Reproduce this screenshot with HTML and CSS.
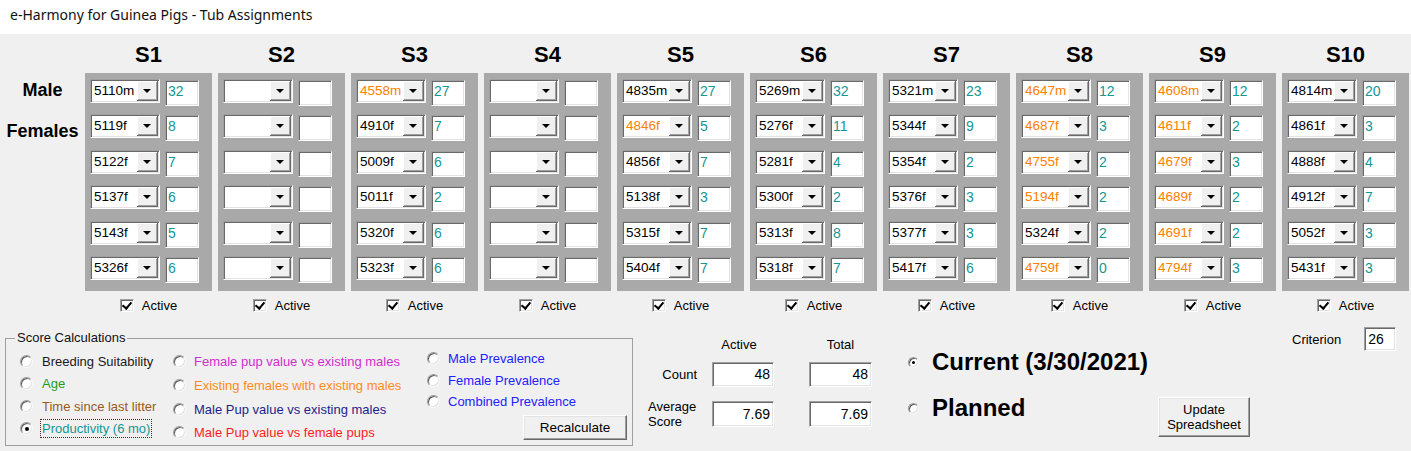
FILE: index.html
```html
<!DOCTYPE html>
<html>
<head>
<meta charset="utf-8">
<link rel="stylesheet" href="styles.css">
</head>
<body>
<div class="titlebar">e-Harmony for Guinea Pigs - Tub Assignments</div>
<div class="top">
  <div class="labels">
    <div class="lbl male">Male</div>
    <div class="lbl females">Females</div>
  </div>
  <div class="cols">
    <div class="col">
      <div class="head">S1</div>
      <div class="panel">
        <div class="row"><div class="combo"><span class="val">5110m</span><span class="btn"></span></div><div class="tb">32</div></div>
        <div class="row"><div class="combo"><span class="val">5119f</span><span class="btn"></span></div><div class="tb">8</div></div>
        <div class="row"><div class="combo"><span class="val">5122f</span><span class="btn"></span></div><div class="tb">7</div></div>
        <div class="row"><div class="combo"><span class="val">5137f</span><span class="btn"></span></div><div class="tb">6</div></div>
        <div class="row"><div class="combo"><span class="val">5143f</span><span class="btn"></span></div><div class="tb">5</div></div>
        <div class="row"><div class="combo"><span class="val">5326f</span><span class="btn"></span></div><div class="tb">6</div></div>
      </div>
      <div class="active"><span class="chk"></span>Active</div>
    </div>
    <div class="col">
      <div class="head">S2</div>
      <div class="panel">
        <div class="row"><div class="combo"><span class="val"></span><span class="btn"></span></div><div class="tb"></div></div>
        <div class="row"><div class="combo"><span class="val"></span><span class="btn"></span></div><div class="tb"></div></div>
        <div class="row"><div class="combo"><span class="val"></span><span class="btn"></span></div><div class="tb"></div></div>
        <div class="row"><div class="combo"><span class="val"></span><span class="btn"></span></div><div class="tb"></div></div>
        <div class="row"><div class="combo"><span class="val"></span><span class="btn"></span></div><div class="tb"></div></div>
        <div class="row"><div class="combo"><span class="val"></span><span class="btn"></span></div><div class="tb"></div></div>
      </div>
      <div class="active"><span class="chk"></span>Active</div>
    </div>
    <div class="col">
      <div class="head">S3</div>
      <div class="panel">
        <div class="row"><div class="combo"><span class="val o">4558m</span><span class="btn"></span></div><div class="tb">27</div></div>
        <div class="row"><div class="combo"><span class="val">4910f</span><span class="btn"></span></div><div class="tb">7</div></div>
        <div class="row"><div class="combo"><span class="val">5009f</span><span class="btn"></span></div><div class="tb">6</div></div>
        <div class="row"><div class="combo"><span class="val">5011f</span><span class="btn"></span></div><div class="tb">2</div></div>
        <div class="row"><div class="combo"><span class="val">5320f</span><span class="btn"></span></div><div class="tb">6</div></div>
        <div class="row"><div class="combo"><span class="val">5323f</span><span class="btn"></span></div><div class="tb">6</div></div>
      </div>
      <div class="active"><span class="chk"></span>Active</div>
    </div>
    <div class="col">
      <div class="head">S4</div>
      <div class="panel">
        <div class="row"><div class="combo"><span class="val"></span><span class="btn"></span></div><div class="tb"></div></div>
        <div class="row"><div class="combo"><span class="val"></span><span class="btn"></span></div><div class="tb"></div></div>
        <div class="row"><div class="combo"><span class="val"></span><span class="btn"></span></div><div class="tb"></div></div>
        <div class="row"><div class="combo"><span class="val"></span><span class="btn"></span></div><div class="tb"></div></div>
        <div class="row"><div class="combo"><span class="val"></span><span class="btn"></span></div><div class="tb"></div></div>
        <div class="row"><div class="combo"><span class="val"></span><span class="btn"></span></div><div class="tb"></div></div>
      </div>
      <div class="active"><span class="chk"></span>Active</div>
    </div>
    <div class="col">
      <div class="head">S5</div>
      <div class="panel">
        <div class="row"><div class="combo"><span class="val">4835m</span><span class="btn"></span></div><div class="tb">27</div></div>
        <div class="row"><div class="combo"><span class="val o">4846f</span><span class="btn"></span></div><div class="tb">5</div></div>
        <div class="row"><div class="combo"><span class="val">4856f</span><span class="btn"></span></div><div class="tb">7</div></div>
        <div class="row"><div class="combo"><span class="val">5138f</span><span class="btn"></span></div><div class="tb">3</div></div>
        <div class="row"><div class="combo"><span class="val">5315f</span><span class="btn"></span></div><div class="tb">7</div></div>
        <div class="row"><div class="combo"><span class="val">5404f</span><span class="btn"></span></div><div class="tb">7</div></div>
      </div>
      <div class="active"><span class="chk"></span>Active</div>
    </div>
    <div class="col">
      <div class="head">S6</div>
      <div class="panel">
        <div class="row"><div class="combo"><span class="val">5269m</span><span class="btn"></span></div><div class="tb">32</div></div>
        <div class="row"><div class="combo"><span class="val">5276f</span><span class="btn"></span></div><div class="tb">11</div></div>
        <div class="row"><div class="combo"><span class="val">5281f</span><span class="btn"></span></div><div class="tb">4</div></div>
        <div class="row"><div class="combo"><span class="val">5300f</span><span class="btn"></span></div><div class="tb">2</div></div>
        <div class="row"><div class="combo"><span class="val">5313f</span><span class="btn"></span></div><div class="tb">8</div></div>
        <div class="row"><div class="combo"><span class="val">5318f</span><span class="btn"></span></div><div class="tb">7</div></div>
      </div>
      <div class="active"><span class="chk"></span>Active</div>
    </div>
    <div class="col">
      <div class="head">S7</div>
      <div class="panel">
        <div class="row"><div class="combo"><span class="val">5321m</span><span class="btn"></span></div><div class="tb">23</div></div>
        <div class="row"><div class="combo"><span class="val">5344f</span><span class="btn"></span></div><div class="tb">9</div></div>
        <div class="row"><div class="combo"><span class="val">5354f</span><span class="btn"></span></div><div class="tb">2</div></div>
        <div class="row"><div class="combo"><span class="val">5376f</span><span class="btn"></span></div><div class="tb">3</div></div>
        <div class="row"><div class="combo"><span class="val">5377f</span><span class="btn"></span></div><div class="tb">3</div></div>
        <div class="row"><div class="combo"><span class="val">5417f</span><span class="btn"></span></div><div class="tb">6</div></div>
      </div>
      <div class="active"><span class="chk"></span>Active</div>
    </div>
    <div class="col">
      <div class="head">S8</div>
      <div class="panel">
        <div class="row"><div class="combo"><span class="val o">4647m</span><span class="btn"></span></div><div class="tb">12</div></div>
        <div class="row"><div class="combo"><span class="val o">4687f</span><span class="btn"></span></div><div class="tb">3</div></div>
        <div class="row"><div class="combo"><span class="val o">4755f</span><span class="btn"></span></div><div class="tb">2</div></div>
        <div class="row"><div class="combo"><span class="val o">5194f</span><span class="btn"></span></div><div class="tb">2</div></div>
        <div class="row"><div class="combo"><span class="val">5324f</span><span class="btn"></span></div><div class="tb">2</div></div>
        <div class="row"><div class="combo"><span class="val o">4759f</span><span class="btn"></span></div><div class="tb">0</div></div>
      </div>
      <div class="active"><span class="chk"></span>Active</div>
    </div>
    <div class="col">
      <div class="head">S9</div>
      <div class="panel">
        <div class="row"><div class="combo"><span class="val o">4608m</span><span class="btn"></span></div><div class="tb">12</div></div>
        <div class="row"><div class="combo"><span class="val o">4611f</span><span class="btn"></span></div><div class="tb">2</div></div>
        <div class="row"><div class="combo"><span class="val o">4679f</span><span class="btn"></span></div><div class="tb">3</div></div>
        <div class="row"><div class="combo"><span class="val o">4689f</span><span class="btn"></span></div><div class="tb">2</div></div>
        <div class="row"><div class="combo"><span class="val o">4691f</span><span class="btn"></span></div><div class="tb">2</div></div>
        <div class="row"><div class="combo"><span class="val o">4794f</span><span class="btn"></span></div><div class="tb">3</div></div>
      </div>
      <div class="active"><span class="chk"></span>Active</div>
    </div>
    <div class="col">
      <div class="head">S10</div>
      <div class="panel">
        <div class="row"><div class="combo"><span class="val">4814m</span><span class="btn"></span></div><div class="tb">20</div></div>
        <div class="row"><div class="combo"><span class="val">4861f</span><span class="btn"></span></div><div class="tb">3</div></div>
        <div class="row"><div class="combo"><span class="val">4888f</span><span class="btn"></span></div><div class="tb">4</div></div>
        <div class="row"><div class="combo"><span class="val">4912f</span><span class="btn"></span></div><div class="tb">7</div></div>
        <div class="row"><div class="combo"><span class="val">5052f</span><span class="btn"></span></div><div class="tb">3</div></div>
        <div class="row"><div class="combo"><span class="val">5431f</span><span class="btn"></span></div><div class="tb">3</div></div>
      </div>
      <div class="active"><span class="chk"></span>Active</div>
    </div>
  </div>
</div>
<div class="bottom">
  <fieldset class="group">
    <legend>Score Calculations</legend>
    <div class="opts">
      <div class="ocol c1">
        <div class="opt"><span class="radio"></span><span class="t-black">Breeding Suitability</span></div>
        <div class="opt"><span class="radio"></span><span class="t-green">Age</span></div>
        <div class="opt"><span class="radio"></span><span class="t-brown">Time since last litter</span></div>
        <div class="opt"><span class="radio on"></span><span class="t-teal focus">Productivity (6 mo)</span></div>
      </div>
      <div class="ocol c2">
        <div class="opt"><span class="radio"></span><span class="t-magenta">Female pup value vs existing males</span></div>
        <div class="opt"><span class="radio"></span><span class="t-orange">Existing females with existing males</span></div>
        <div class="opt"><span class="radio"></span><span class="t-navy">Male Pup value vs existing males</span></div>
        <div class="opt"><span class="radio"></span><span class="t-red">Male Pup value vs female pups</span></div>
      </div>
      <div class="ocol c3">
        <div class="opt"><span class="radio"></span><span class="t-blue">Male Prevalence</span></div>
        <div class="opt"><span class="radio"></span><span class="t-blue">Female Prevalence</span></div>
        <div class="opt"><span class="radio"></span><span class="t-blue">Combined Prevalence</span></div>
        <button class="wbtn recalc">Recalculate</button>
      </div>
    </div>
  </fieldset>
  <div class="stats">
    <div class="srow shead"><span class="sl"></span><span class="sh1">Active</span><span class="sh2">Total</span></div>
    <div class="srow scount"><span class="sl right">Count</span><span class="sc"><span class="nbox">48</span></span><span class="nbox">48</span></div>
    <div class="srow savg"><span class="sl two">Average<br>Score</span><span class="sc"><span class="nbox tall">7.69</span></span><span class="nbox tall">7.69</span></div>
  </div>
  <div class="mode">
    <div class="mrow"><span class="radio small on"></span>Current (3/30/2021)</div>
    <div class="mrow second"><span class="radio small"></span>Planned</div>
  </div>
  <button class="wbtn update">Update<br>Spreadsheet</button>
  <div class="crit"><span>Criterion</span><span class="cbox">26</span></div>
</div>
</body>
</html>
```
FILE: styles.css
```css
* { box-sizing: border-box; }
html, body { margin: 0; padding: 0; }
body {
  width: 1411px;
  height: 451px;
  overflow: hidden;
  background: #f0f0f0;
  font-family: "Liberation Sans", Arial, sans-serif;
  font-size: 13px;
  color: #000;
}
.titlebar {
  height: 34px;
  background: #fff;
  font-family: "Noto Sans", "Open Sans", sans-serif;
  font-size: 14px;
  line-height: 30px;
  padding-left: 10px;
  color: #111;
}
.top { display: flex; height: 286px; }
.labels {
  width: 85px;
  flex: none;
  text-align: center;
  font-weight: bold;
  font-size: 18px;
  line-height: 20px;
}
.lbl.male { margin-top: 46px; }
.lbl.females { margin-top: 21px; }
.cols { display: flex; gap: 6px; }
.col { width: 127px; flex: none; }
.head {
  height: 39px;
  padding-top: 9px;
  text-align: center;
  font-weight: bold;
  font-size: 22px;
  line-height: 24px;
}
.panel {
  height: 218px;
  background: #a9a9a9;
  padding: 6px 0 0 5px;
  display: flex;
  flex-direction: column;
  gap: 11.4px;
}
.row { display: flex; align-items: flex-start; height: 24px; }
.combo {
  width: 70px;
  height: 24px;
  display: flex;
  background: #fff;
  border: 1px solid;
  border-color: #a0a0a0 #fff #fff #a0a0a0;
  box-shadow: inset 1px 1px 0 #696969, inset -1px -1px 0 #e3e3e3;
  padding: 1px;
}
.val {
  flex: 1;
  font-size: 13.5px;
  line-height: 20px;
  padding-left: 2px;
  white-space: nowrap;
  overflow: hidden;
  color: #000;
}
.val.o { color: #ff8000; }
.btn {
  width: 21px;
  flex: none;
  background: #f0f0f0;
  border-right: 1px solid #696969;
  border-bottom: 1px solid #696969;
  box-shadow: inset 1px 1px 0 #fff, inset -1px -1px 0 #a0a0a0;
  display: flex;
  align-items: center;
  justify-content: center;
}
.btn::after {
  content: "";
  width: 0;
  height: 0;
  border-left: 4px solid transparent;
  border-right: 4px solid transparent;
  border-top: 4px solid #000;
  margin-top: 1px;
}
.tb {
  width: 34px;
  height: 26px;
  margin-left: 5px;
  margin-top: 1px;
  background: #fff;
  border: 1px solid;
  border-color: #a0a0a0 #fff #fff #a0a0a0;
  box-shadow: inset 1px 1px 0 #696969, inset -1px -1px 0 #e3e3e3;
  color: #139696;
  font-size: 14px;
  line-height: 21px;
  padding-left: 2px;
}
.active {
  height: 29px;
  display: flex;
  align-items: center;
  justify-content: center;
  gap: 8px;
  font-size: 13px;
}
.chk {
  width: 14px;
  height: 13px;
  background: #fff;
  border: 1px solid;
  border-color: #a0a0a0 #fff #fff #a0a0a0;
  box-shadow: inset 1px 1px 0 #696969, inset -1px -1px 0 #e3e3e3;
  display: flex;
  align-items: center;
  justify-content: center;
}
.chk::after {
  content: "";
  width: 4px;
  height: 7px;
  border-right: 2px solid #000;
  border-bottom: 2px solid #000;
  transform: rotate(40deg);
  margin-top: -2px;
}

/* bottom */
.bottom {
  display: flex;
  align-items: flex-start;
  height: 131px;
  padding-left: 5px;
}
.group {
  margin: 11px 0 0 0;
  padding: 0;
  width: 628px;
  min-width: 0;
  border: 1px solid #a0a0a0;
  flex: none;
}
.group legend {
  margin-left: 9px;
  padding: 0 2px;
  font-size: 13px;
  line-height: 14px;
  color: #111;
}
.opts { display: flex; height: 100px; }
.ocol { display: flex; flex-direction: column; }
.c1 { width: 167px; padding: 5px 0 0 14px; }
.c1 .opt { height: 22.5px; gap: 9px; }
.c2 { width: 254px; padding: 5px 0 0 0; }
.c2 .opt { height: 23.7px; }
.c3 { flex: 1; padding: 3px 5px 0 0; }
.c3 .opt { height: 21.5px; }
.opt { display: flex; align-items: center; gap: 8px; white-space: nowrap; }
.radio {
  width: 13px;
  height: 13px;
  flex: none;
  border-radius: 50%;
  background: #fff;
  border: 1px solid;
  border-color: #9a9a9a #f8f8f8 #f8f8f8 #9a9a9a;
  box-shadow: inset 1px 1px 0 #5a5a5a, inset -1px -1px 0 #e0e0e0;
  display: flex;
  align-items: center;
  justify-content: center;
}
.radio.on::after {
  content: "";
  width: 4px;
  height: 4px;
  border-radius: 50%;
  background: #000;
}
.radio.small { width: 11px; height: 11px; }
.radio.small.on::after { width: 3px; height: 3px; }
.t-black { color: #1a1a1a; }
.t-green { color: #1f9b1f; }
.t-brown { color: #9a5a1e; }
.t-teal { color: #139696; }
.t-magenta { color: #d22cd2; }
.t-orange { color: #ff8a1a; }
.t-navy { color: #1e1e8c; }
.t-red { color: #ff1c1c; }
.t-blue { color: #2222ff; }
.focus { outline: 1px dotted #5a2020; outline-offset: 1px; }
.wbtn {
  font-family: "Liberation Sans", Arial, sans-serif;
  background: #f0f0f0;
  border: 1px solid;
  border-color: #fff #696969 #696969 #fff;
  box-shadow: inset -1px -1px 0 #a0a0a0, inset 1px 1px 0 #e3e3e3;
  color: #000;
  padding: 0;
}
.recalc {
  align-self: flex-end;
  width: 104px;
  height: 25px;
  margin-top: 2px;
  font-size: 13.5px;
}
.stats { margin: 17px 0 0 15px; width: 224px; flex: none; }
.srow { display: flex; align-items: center; }
.shead { height: 15px; line-height: 15px; }
.sl { width: 64px; flex: none; }
.sl.right { text-align: right; padding-right: 15px; }
.sl.two { line-height: 15px; }
.sh1 { width: 97px; padding-right: 43px; text-align: center; }
.sh2 { width: 63px; text-align: center; }
.sc { width: 97px; flex: none; }
.scount { margin-top: 10px; height: 25px; }
.savg { margin-top: 14px; height: 26px; }
.nbox {
  display: block;
  width: 62px;
  height: 25px;
  background: #fff;
  border: 1px solid;
  border-color: #a0a0a0 #fff #fff #a0a0a0;
  box-shadow: inset 1px 1px 0 #696969, inset -1px -1px 0 #e3e3e3;
  text-align: right;
  padding-right: 3px;
  font-size: 14px;
  line-height: 23px;
}
.srow > .nbox { width: 63px; }
.nbox.tall { height: 26px; line-height: 24px; }
.mode { margin: 28px 0 0 36px; width: 250px; flex: none; }
.mrow {
  display: flex;
  align-items: center;
  gap: 13px;
  height: 28px;
  font-size: 24px;
  font-weight: bold;
  white-space: nowrap;
}
.mrow.second { margin-top: 18px; }
.update {
  margin-top: 77px;
  width: 92px;
  height: 40px;
  flex: none;
  font-size: 13px;
  line-height: 15px;
}
.crit {
  margin: 7px 0 0 42px;
  display: flex;
  align-items: center;
  gap: 23px;
  height: 24px;
}
.cbox {
  width: 32px;
  height: 24px;
  background: #fff;
  border: 1px solid;
  border-color: #a0a0a0 #fff #fff #a0a0a0;
  box-shadow: inset 1px 1px 0 #696969, inset -1px -1px 0 #e3e3e3;
  font-size: 14px;
  line-height: 22px;
  padding-left: 3px;
}
```
